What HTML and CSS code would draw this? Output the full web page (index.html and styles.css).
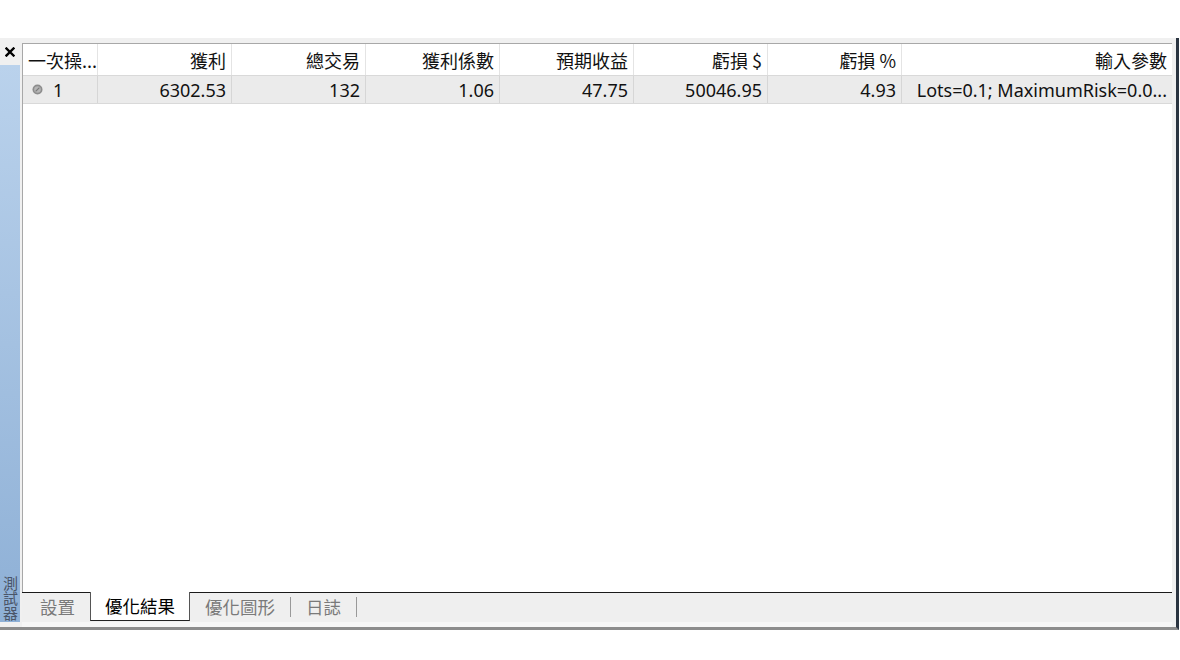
FILE: index.html
```html
<!DOCTYPE html>
<html>
<head>
<meta charset="utf-8">
<link rel="stylesheet" href="styles.css">
</head>
<body>
<div class="panel">
  <div class="side">
    <div class="close">
      <svg width="10" height="10" viewBox="0 0 10 10"><path d="M1.5 1.5 L8.5 8.5 M8.5 1.5 L1.5 8.5" stroke="#000" stroke-width="2.4" stroke-linecap="square"/></svg>
    </div>
    <div class="strip"><span class="vtext">測試器</span></div>
  </div>
  <div class="main">
    <div class="table">
      <div class="row head">
        <div class="c first">一次操...</div>
        <div class="c">獲利</div>
        <div class="c">總交易</div>
        <div class="c">獲利係數</div>
        <div class="c">預期收益</div>
        <div class="c">虧損 $</div>
        <div class="c">虧損 %</div>
        <div class="c last">輸入參數</div>
      </div>
      <div class="row data">
        <div class="c first"><span class="dot"><svg width="11" height="11" viewBox="0 0 11 11"><circle cx="5.5" cy="5.5" r="5" fill="#8c8c8c"/><circle cx="5.5" cy="5.5" r="3.3" fill="#b5b5b5"/><path d="M3.6 7.4 L7.4 3.6" stroke="#7a7a7a" stroke-width="1.2"/></svg></span>1</div>
        <div class="c">6302.53</div>
        <div class="c">132</div>
        <div class="c">1.06</div>
        <div class="c">47.75</div>
        <div class="c">50046.95</div>
        <div class="c">4.93</div>
        <div class="c last">Lots=0.1; MaximumRisk=0.0...</div>
      </div>
    </div>
    <div class="tabs">
      <div class="tab">設置</div>
      <div class="tab active">優化結果</div>
      <div class="tab">優化圖形</div>
      <div class="sep"></div>
      <div class="tab">日誌</div>
      <div class="sep"></div>
    </div>
    <div class="foot"></div>
  </div>
</div>
</body>
</html>
```

FILE: styles.css
```css
html, body {
  margin: 0;
  padding: 0;
  background: #ffffff;
}
body {
  width: 1180px;
  height: 660px;
  overflow: hidden;
  font-family: "Noto Sans", "Noto Sans CJK TC", sans-serif;
  font-size: 18px;
  color: #111;
}
.panel {
  margin-top: 38px;
  width: 1176px;
  height: 589px;
  display: flex;
  background: #f0f0f0;
  border-right: 3px solid #2a3440;
  border-bottom: 3px solid #8c8c8c;
}
.side {
  width: 22px;
  display: flex;
  flex-direction: column;
}
.close {
  height: 27px;
  display: flex;
  justify-content: center;
  align-items: center;
  padding-right: 2px;
}
.strip {
  flex: 1;
  width: 20px;
  margin-bottom: 5px;
  background: linear-gradient(#bad2ec, #8eb0d6);
  display: flex;
  flex-direction: column;
  justify-content: flex-end;
  align-items: center;
  overflow: hidden;
}
.vtext {
  writing-mode: vertical-rl;
  font-family: "Noto Sans CJK TC", sans-serif;
  font-size: 15px;
  line-height: 16px;
  color: #4a5568;
  margin-bottom: 1px;
}
.main {
  flex: 1;
  display: flex;
  flex-direction: column;
  padding-top: 5px;
  padding-right: 4px;
}
.table {
  flex: 1;
  background: #fff;
  border-top: 1px solid #a8a8a8;
  border-left: 1px solid #a8a8a8;
}
.row {
  display: grid;
  grid-template-columns: 75px 134px 134px 134px 134px 134px 134px 1fr;
}
.head {
  height: 31px;
  border-bottom: 1px solid #d9d9d9;
}
.data {
  height: 27px;
  background: #ebebeb;
  border-bottom: 1px solid #d9d9d9;
}
.c {
  display: flex;
  align-items: center;
  justify-content: flex-end;
  padding-right: 5px;
  border-right: 1px solid #e0e0e0;
  white-space: nowrap;
  overflow: hidden;
  font-family: "Noto Sans", "Noto Sans CJK TC", sans-serif;
}
.head .c {
  font-family: "Noto Sans CJK TC", sans-serif;
  border-right-color: #e4e4e4;
}
.data .c {
  border-right-color: #d6d6d6;
}
.c.first {
  justify-content: flex-start;
  padding-left: 5px;
  padding-right: 0;
}
.c.last {
  border-right: none;
}
.dot {
  display: flex;
  margin: 0 10px 0 4px;
}
.tabs {
  height: 29px;
  border-top: 1px solid #1a1a1a;
  background: #efefef;
  display: flex;
  align-items: flex-start;
  padding-left: 3px;
  font-family: "Noto Sans CJK TC", sans-serif;
  font-size: 17.5px;
}
.tab {
  padding: 0 15px;
  height: 27px;
  line-height: 27px;
  color: #7a7a7a;
}
.tab.active {
  margin-top: -1px;
  height: 28px;
  background: #fff;
  color: #000;
  border-left: 1px solid #555;
  border-right: 1px solid #555;
  border-bottom: 1px solid #222;
  padding: 0 14px;
}
.sep {
  width: 1px;
  height: 20px;
  margin-top: 4px;
  background: #999;
}
.foot {
  height: 5px;
  background: #f6f6f6;
}
```
